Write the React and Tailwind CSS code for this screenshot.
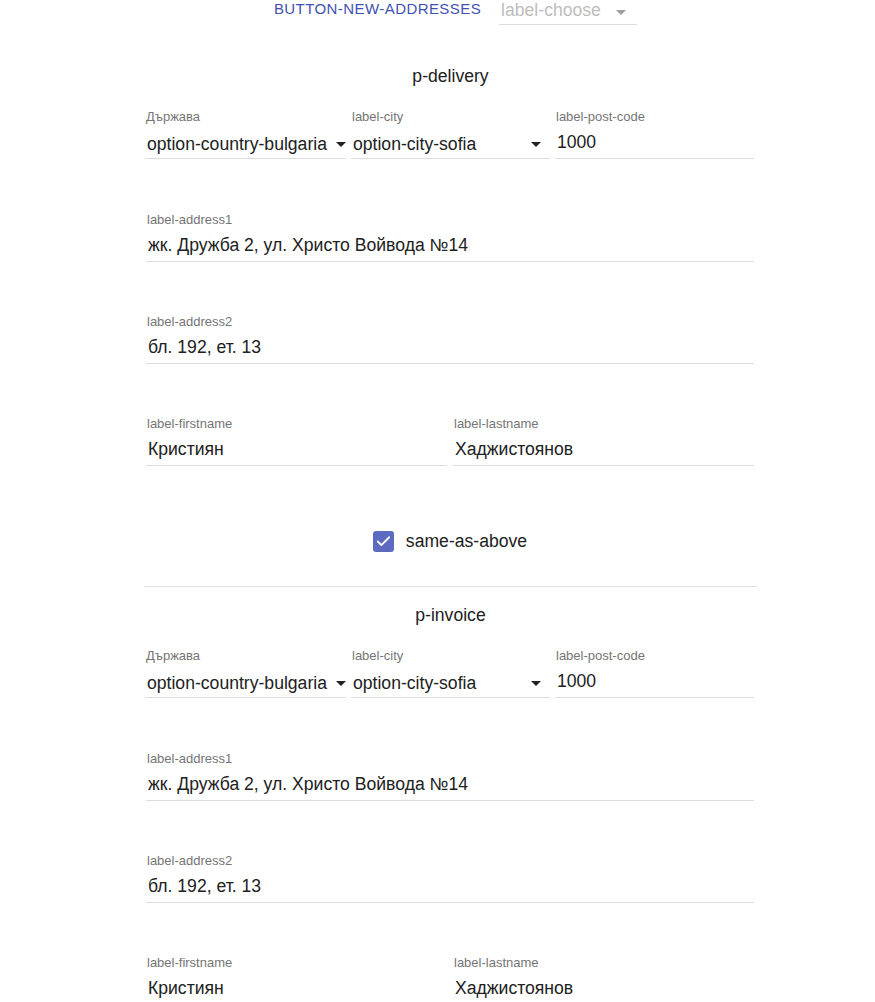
import { Check } from "lucide-react";

const font = { fontFamily: "'Liberation Sans', Arial, sans-serif" };

function Caret({ className = "" }) {
    return (
        <svg width="10" height="5" viewBox="0 0 10 5" className={className}>
            <path d="M0 0 L10 0 L5 5 Z" fill="currentColor" />
        </svg>
    );
}

function Field({ label, value, select, caretClass = "mr-[4px]", valueClass = "mt-[2px]", className = "" }) {
    return (
        <div className={"flex flex-col " + className}>
            <span className="text-[13px] leading-[16px] text-[#757575] pl-[1px]">{label}</span>
            <div className="flex items-center h-[34px] border-b border-[#dcdcdc] pl-[2px]">
                <span className={"flex-1 text-[17.6px] text-[#212121] whitespace-nowrap " + valueClass}>{value}</span>
                {select && <Caret className={"text-[#212121] mt-[5px] shrink-0 " + caretClass} />}
            </div>
        </div>
    );
}

function AddressBlock({ title }) {
    return (
        <div className="flex flex-col">
            <h3 className="text-center text-[17.6px] text-[#212121] leading-[24px]">{title}</h3>
            <div className="flex gap-[5px] mt-[21px] px-[1px]">
                <Field label="Държава" value="option-country-bulgaria" select caretClass="mr-0 ml-[7px]" valueClass="mt-[5px]" className="w-[201px]" />
                <Field label="label-city" value="option-city-sofia" select caretClass="mr-[9px]" valueClass="mt-[5px]" className="w-[199px]" />
                <Field label="label-post-code" value="1000" className="w-[199px]" />
            </div>
            <Field label="label-address1" value="жк. Дружба 2, ул. Христо Войвода №14" className="mt-[53px] ml-[2px] w-[608px]" />
            <Field label="label-address2" value="бл. 192, ет. 13" className="mt-[52px] ml-[2px] w-[608px]" />
            <div className="flex gap-[6px] mt-[52px] ml-[2px] w-[608px]">
                <Field label="label-firstname" value="Кристиян" className="w-[301px]" />
                <Field label="label-lastname" value="Хаджистоянов" className="w-[301px]" />
            </div>
        </div>
    );
}

export default function App() {
    return (
        <div className="bg-white min-h-screen" style={font}>
            <div className="ml-[144px] w-[613px]">
                <div className="flex justify-center items-start gap-[18px] pl-[10px]">
                    <button className="text-[15px] leading-[18px] text-[#3f51b5] uppercase tracking-[0.43px]">
                        button-new-addresses
                    </button>
                    <div className="flex items-center w-[138px] h-[25px] border-b border-[#dcdcdc] pl-[2px]">
                        <span className="flex-1 text-[17.6px] text-[#bdbdbd] -mt-[4px]">label-choose</span>
                        <Caret className="text-[#9e9e9e] mr-[11px]" />
                    </div>
                </div>

                <div className="mt-[39px]">
                    <AddressBlock title="p-delivery" />
                </div>

                <label className="flex items-center justify-center gap-[12px] mt-[62px] h-[27px] pr-[1px]">
                    <span className="w-[21px] h-[21px] rounded-[3px] bg-[#5c6bc0] flex items-center justify-center">
                        <Check size={17} strokeWidth={2.5} className="text-white" />
                    </span>
                    <span className="text-[17.6px] text-[#212121]">same-as-above</span>
                </label>

                <div className="border-t border-[#e0e0e0] mt-[31px] pt-[16px]">
                    <AddressBlock title="p-invoice" />
                </div>
            </div>
        </div>
    );
}
